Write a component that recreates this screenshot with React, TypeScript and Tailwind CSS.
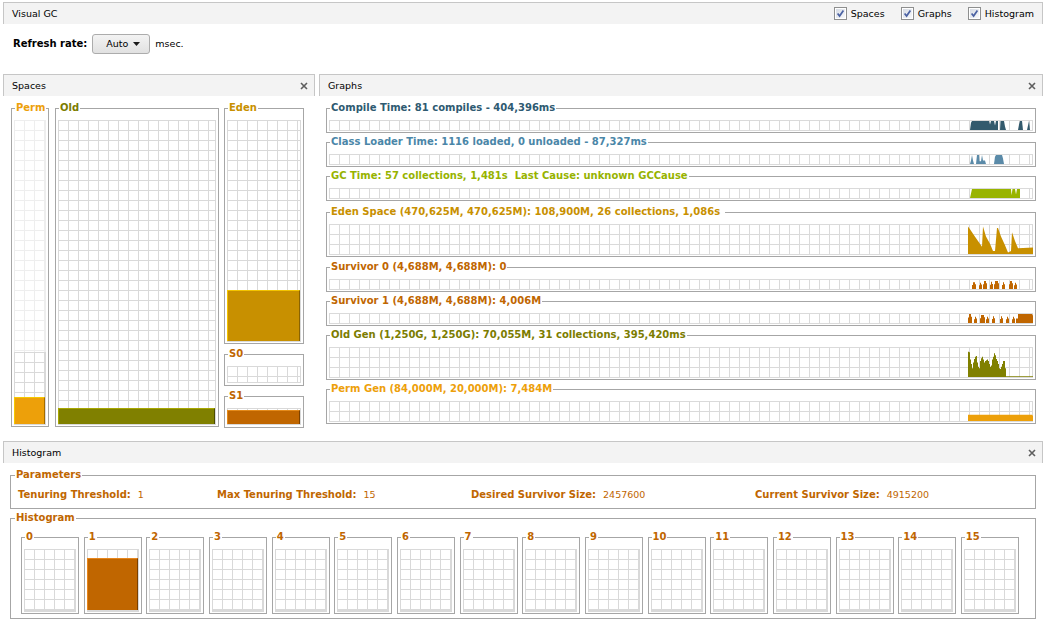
import React from 'react';

const GRID =
  "bg-[image:linear-gradient(to_right,#d9d9d9_1px,transparent_1px),linear-gradient(to_bottom,#d9d9d9_1px,transparent_1px)] bg-[size:10px_10px] border-r border-b border-[#d9d9d9]";
const GRID_FAINT =
  "bg-[image:linear-gradient(to_right,#eeeeee_1px,transparent_1px),linear-gradient(to_bottom,#eeeeee_1px,transparent_1px)] bg-[size:10px_10px] border-r border-[#eeeeee]";
const GRID_HIST =
  "bg-[image:linear-gradient(to_right,#d9d9d9_1px,transparent_1px),linear-gradient(to_bottom,#d9d9d9_1px,transparent_1px)] bg-[size:10px_10px] border-r border-b-2 border-[#d9d9d9]";

type Pt = [number, number];

function CheckBox() {
  return (
    <svg width="13" height="13" viewBox="0 0 13 13" className="block shrink-0">
      <defs>
        <linearGradient id="cb" x1="0" y1="0" x2="1" y2="1">
          <stop offset="0" stopColor="#d6dbe4" />
          <stop offset="1" stopColor="#f8f9fb" />
        </linearGradient>
      </defs>
      <rect x="0.5" y="0.5" width="12" height="12" fill="#fff" stroke="#8e8f8f" />
      <rect x="2" y="2" width="9" height="9" fill="url(#cb)" />
      <path d="M3.6 6.4 L5.6 9 L9.4 3.4" fill="none" stroke="#4b62a3" strokeWidth="1.7" />
    </svg>
  );
}

function CloseIcon() {
  return (
    <svg width="8" height="8" viewBox="0 0 8 8" className="block">
      <path d="M1 1 L7 7 M7 1 L1 7" stroke="#5e5e5e" strokeWidth="1.6" />
    </svg>
  );
}

function PanelHeader({ title, close = true }: { title: string; close?: boolean }) {
  return (
    <div className="h-[22px] flex items-center justify-between pl-[8px] pr-[6px] bg-[#f3f3f3] border-t border-l border-r border-[#c6c6c6]">
      <span>{title}</span>
      {close && <CloseIcon />}
    </div>
  );
}

function Box({
  label,
  color,
  className = '',
  children,
}: {
  label: string;
  color: string;
  className?: string;
  children?: React.ReactNode;
}) {
  return (
    <fieldset className={`border border-[#a6a6a6] px-[2px] pb-[1px] pt-[6px] flex flex-col min-w-0 ${className}`}>
      <legend className={`ml-[1px] px-[1px] font-bold text-[10px] leading-[12px] whitespace-pre ${color}`}>{label}</legend>
      {children}
    </fieldset>
  );
}

const X0 = 329;

function area(pts: Pt[], H: number) {
  const base = H - 1;
  return (
    pts
      .map(([gx, f], i) => `${i === 0 ? 'M' : 'L'}${gx - X0} ${(base - f * (base - 1)).toFixed(2)}`)
      .join(' ') + ' Z'
  );
}

function spikes(list: [number, number, number][]): Pt[][] {
  return list.map(([x, w, f]) => [
    [x, 0],
    [x, f * 0.6],
    [x + 1, f * 0.6],
    [x + 1, f],
    [x + w - 1, f],
    [x + w - 1, f * 0.7],
    [x + w, f * 0.7],
    [x + w, 0],
  ]);
}

const oldVals = [
  0.87, 0.85, 0.6, 0.45, 0.3, 0.5, 0.62, 0.7, 0.72, 0.5, 0.35, 0.3, 0.55, 0.65, 0.7, 0.6, 0.5, 0.55, 0.58, 0.6,
  0.55, 0.45, 0.35, 0.4, 0.6, 0.7, 0.82, 0.75, 0.62, 0.55, 0.45, 0.3, 0.28, 0.35, 0.45, 0.55, 0.55, 0.3,
];
const oldArea: Pt[] = [
  [968, 0],
  ...oldVals.flatMap((v, i) => [
    [968 + i, v] as Pt,
    [969 + i, v] as Pt,
  ]),
  [1006, 0],
  [1006, 0.03],
  [1033, 0.03],
  [1033, 0],
];

const graphs: {
  title: string;
  color: string;
  fill: string;
  rows: number;
  mt: string;
  areas: Pt[][];
}[] = [
  {
    title: 'Compile Time: 81 compiles - 404,396ms',
    color: 'text-[#2e5a71]',
    fill: '#335a6d',
    rows: 1,
    mt: '',
    areas: [
      [[970, 0], [971, 0.8], [972, 1], [989, 1], [990, 0.6], [991, 1], [994, 1], [995, 0.5], [996, 1], [998, 1], [998, 0]],
      [[1000, 0], [1000.5, 1], [1004, 1], [1005, 0.4], [1006, 0]],
      [[1018, 0], [1019, 0.6], [1020, 1], [1022, 1], [1023, 0]],
      [[1027, 0], [1028, 0.5], [1029, 1], [1030, 0]],
    ],
  },
  {
    title: 'Class Loader Time: 1116 loaded, 0 unloaded - 87,327ms',
    color: 'text-[#4a86a8]',
    fill: '#5a8aa8',
    rows: 1,
    mt: 'mt-[3px]',
    areas: [
      [[970, 0], [971, 0.4], [972, 1], [973, 0.4], [974, 0]],
      [[976, 0], [977, 1], [979, 1], [979.5, 0.3], [981, 0.3], [982, 1], [983, 0.4], [985, 0.4], [986, 0]],
      [[994, 0], [995, 0.8], [996, 1], [1002, 1], [1003, 0.6], [1004, 0]],
    ],
  },
  {
    title: 'GC Time: 57 collections, 1,481s  Last Cause: unknown GCCause',
    color: 'text-[#97b300]',
    fill: '#99b400',
    rows: 1,
    mt: 'mt-[3px]',
    areas: [[[970, 0], [972, 1], [1011, 1], [1011.5, 0.3], [1012.5, 1], [1015, 1], [1016, 0.4], [1017, 1], [1020, 1], [1020, 0]]],
  },
  {
    title: 'Eden Space (470,625M, 470,625M): 108,900M, 26 collections, 1,086s ',
    color: 'text-[#c89000]',
    fill: '#c89000',
    rows: 3,
    mt: 'mt-[5px]',
    areas: [
      [
        [968, 0], [968, 0.95], [970, 0.85], [974, 0.65], [978, 0.45], [982, 0.25], [983, 0.95], [986, 0.6], [990, 0.35],
        [993, 0.1], [995, 0.1], [997, 0.9], [998, 0.9], [1001, 0.6], [1005, 0.3], [1008, 0.05], [1011, 0.1], [1012, 0.75],
        [1015, 0.45], [1018, 0.2], [1033, 0.22], [1033, 0],
      ],
    ],
  },
  {
    title: 'Survivor 0 (4,688M, 4,688M): 0',
    color: 'text-[#c06600]',
    fill: '#c06600',
    rows: 1,
    mt: 'mt-[4px]',
    areas: spikes([
      [972, 4, 0.75], [979, 3, 0.7], [983, 4, 0.9], [990, 3, 0.8], [994, 5, 0.9], [1002, 3, 0.75], [1009, 4, 0.9], [1014, 3, 0.7],
    ]),
  },
  {
    title: 'Survivor 1 (4,688M, 4,688M): 4,006M',
    color: 'text-[#c06600]',
    fill: '#c06600',
    rows: 1,
    mt: 'mt-[3px]',
    areas: [
      ...spikes([
        [968, 4, 1], [974, 3, 0.7], [980, 5, 0.9], [986, 3, 0.7], [992, 3, 0.75], [1000, 3, 0.75], [1006, 3, 0.7], [1012, 3, 0.7],
      ]),
      [[1016, 0], [1016, 0.5], [1018, 0.5], [1018, 1], [1032, 1], [1033, 0.8], [1033, 0]],
    ],
  },
  {
    title: 'Old Gen (1,250G, 1,250G): 70,055M, 31 collections, 395,420ms',
    color: 'text-[#7c7c00]',
    fill: '#808000',
    rows: 3,
    mt: 'mt-[3px]',
    areas: [oldArea],
  },
  {
    title: 'Perm Gen (84,000M, 20,000M): 7,484M',
    color: 'text-[#eda00a]',
    fill: '#eda00a',
    rows: 2,
    mt: 'mt-[3px]',
    areas: [[[968, 0], [968, 0.33], [1032, 0.33], [1033, 0.28], [1033, 0]]],
  },
];

function Chart({ rows, fill, areas }: { rows: number; fill: string; areas: Pt[][] }) {
  const W = 704;
  const H = rows * 10 + 1;
  const xs: number[] = [];
  for (let x = 0; x < W - 2; x += 10) xs.push(x + 0.5);
  xs.push(W - 0.5);
  const ys: number[] = [];
  for (let y = 0; y < H; y += 10) ys.push(y + 0.5);
  return (
    <svg width={W} height={H} className="block">
      {xs.map((x) => (
        <line key={`v${x}`} x1={x} y1={0} x2={x} y2={H} stroke="#dadada" strokeWidth="1" />
      ))}
      {ys.map((y) => (
        <line key={`h${y}`} x1={0} y1={y} x2={W} y2={y} stroke="#dadada" strokeWidth="1" />
      ))}
      {areas.map((a, i) => (
        <path key={i} d={area(a, H)} fill={fill} />
      ))}
    </svg>
  );
}

function Fill({ h, cls }: { h: string; cls: string }) {
  return <div className={`${h} ${cls} shrink-0`} />;
}

const params: [string, string, string][] = [
  ['Tenuring Threshold:', '1', 'w-[199px]'],
  ['Max Tenuring Threshold:', '15', 'w-[254px]'],
  ['Desired Survivor Size:', '2457600', 'w-[284px]'],
  ['Current Survivor Size:', '4915200', ''],
];

export default function App() {
  return (
    <div className="w-[1049px] h-[632px] overflow-hidden bg-white text-black font-['DejaVu_Sans',sans-serif] text-[9.5px] leading-[12px]">
      <div className="pl-[3px] pr-[6px] pt-[2px]">
        {/* Top bar */}
        <div className="h-[22px] flex items-center justify-between pl-[8px] pr-[8px] bg-[#f3f3f3] border-t border-l border-r border-[#c6c6c6]">
          <span>Visual GC</span>
          <div className="flex items-center gap-[16px]">
            {['Spaces', 'Graphs', 'Histogram'].map((t) => (
              <div key={t} className="flex items-center gap-[4px]">
                <CheckBox />
                <span>{t}</span>
              </div>
            ))}
          </div>
        </div>

        {/* Refresh rate */}
        <div className="h-[50px] flex items-start pt-[10px] pl-[10px]">
          <div className="h-[20px] flex items-center gap-[5px]">
            <span className="font-bold text-[10px]">Refresh rate:</span>
            <div className="w-[58px] h-[20px] flex items-center justify-between pl-[13px] pr-[9px] rounded-[3px] border border-[#acacac] bg-gradient-to-b from-[#f3f3f3] to-[#e1e1e1]">
              <span>Auto</span>
              <svg width="7" height="4" viewBox="0 0 7 4" className="block">
                <path d="M0 0 H7 L3.5 4 Z" fill="#1a1a1a" />
              </svg>
            </div>
            <span>msec.</span>
          </div>
        </div>

        {/* Spaces + Graphs */}
        <div className="h-[356px] flex gap-[4px]">
          <div className="w-[312px] shrink-0 flex flex-col">
            <PanelHeader title="Spaces" />
            <div className="flex px-[8px] pt-[6px]">
              <Box label="Perm" color="text-[#eda00a]" className="w-[38px] h-[325px] shrink-0">
                <div className={`flex-1 ${GRID_FAINT}`} />
                <div className={`h-[73px] flex flex-col justify-end ${GRID}`}>
                  <Fill h="h-[27px]" cls="bg-[#eda00a] border-t border-l border-r border-t-[#f7c900] border-l-[#f7c900] border-r-[#a36c00]" />
                </div>
              </Box>
              <Box label="Old" color="text-[#7c7c00]" className="w-[164px] h-[325px] ml-[6px] shrink-0">
                <div className={`flex-1 flex flex-col justify-end ${GRID}`}>
                  <Fill h="h-[16px]" cls="bg-[#808000] border-t border-l border-r border-t-[#a8a800] border-l-[#a8a800] border-r-[#4c4c00]" />
                </div>
              </Box>
              <div className="w-[80px] ml-[5px] shrink-0">
                <Box label="Eden" color="text-[#c89000]" className="h-[242px]">
                  <div className={`h-[222px] flex flex-col justify-end ${GRID}`}>
                    <Fill h="h-[51px]" cls="bg-[#c89000] border-t border-l border-r border-t-[#f3c400] border-l-[#f3c400] border-r-[#8a6300]" />
                  </div>
                </Box>
                <Box label="S0" color="text-[#c06600]" className="h-[38px] mt-[4px]">
                  <div className={`h-[17px] ${GRID}`} />
                </Box>
                <Box label="S1" color="text-[#c06600]" className="h-[38px] mt-[4px]">
                  <div className={`h-[17px] flex flex-col justify-end ${GRID}`}>
                    <Fill h="h-[14px]" cls="bg-[#c06600] border-t border-l border-r border-t-[#e48a1a] border-l-[#e48a1a] border-r-[#7c4200]" />
                  </div>
                </Box>
              </div>
            </div>
          </div>

          <div className="flex-1 flex flex-col min-w-0">
            <PanelHeader title="Graphs" />
            <div className="flex flex-col px-[7px] pt-[6px]">
              {graphs.map((g) => (
                <fieldset key={g.title} className={`border border-[#a6a6a6] px-[2px] pt-[6px] pb-[1px] min-w-0 ${g.mt}`}>
                  <legend className={`ml-[1px] px-[1px] font-bold text-[10px] leading-[12px] whitespace-pre ${g.color}`}>{g.title}</legend>
                  <Chart rows={g.rows} fill={g.fill} areas={g.areas} />
                </fieldset>
              ))}
            </div>
          </div>
        </div>

        {/* Histogram */}
        <div className="mt-[11px]">
          <PanelHeader title="Histogram" />
          <div className="flex flex-col px-[7px] pt-[6px]">
            <fieldset className="h-[40px] border border-[#a6a6a6] px-[3px] pt-[8px]">
              <legend className="ml-[1px] px-[1px] font-bold text-[10px] leading-[12px] text-[#c06600]">Parameters</legend>
              <div className="flex items-center ml-[4px] text-[#c06600]">
                {params.map(([k, v, w]) => (
                  <div key={k} className={`flex items-center gap-[7px] ${w}`}>
                    <span className="font-bold text-[10px]">{k}</span>
                    <span>{v}</span>
                  </div>
                ))}
              </div>
            </fieldset>
            <fieldset className="h-[107px] mt-[3px] border border-[#a6a6a6] px-[3px] pt-[7px]">
              <legend className="ml-[1px] px-[1px] font-bold text-[10px] leading-[12px] text-[#c06600]">Histogram</legend>
              <div className="flex gap-[4.67px] pl-[7px]">
                {Array.from({ length: 16 }, (_, i) => (
                  <Box key={i} label={String(i)} color="text-[#c06600]" className="w-[58px] h-[83px] shrink-0">
                    <div className={`flex-1 flex flex-col justify-end ${GRID_HIST}`}>
                      {i === 1 && (
                        <Fill h="h-[52px]" cls="bg-[#c06600] border-t border-l border-r border-t-[#e8861c] border-l-[#e8861c] border-r-[#7a4000]" />
                      )}
                    </div>
                  </Box>
                ))}
              </div>
            </fieldset>
          </div>
        </div>
      </div>
    </div>
  );
}
